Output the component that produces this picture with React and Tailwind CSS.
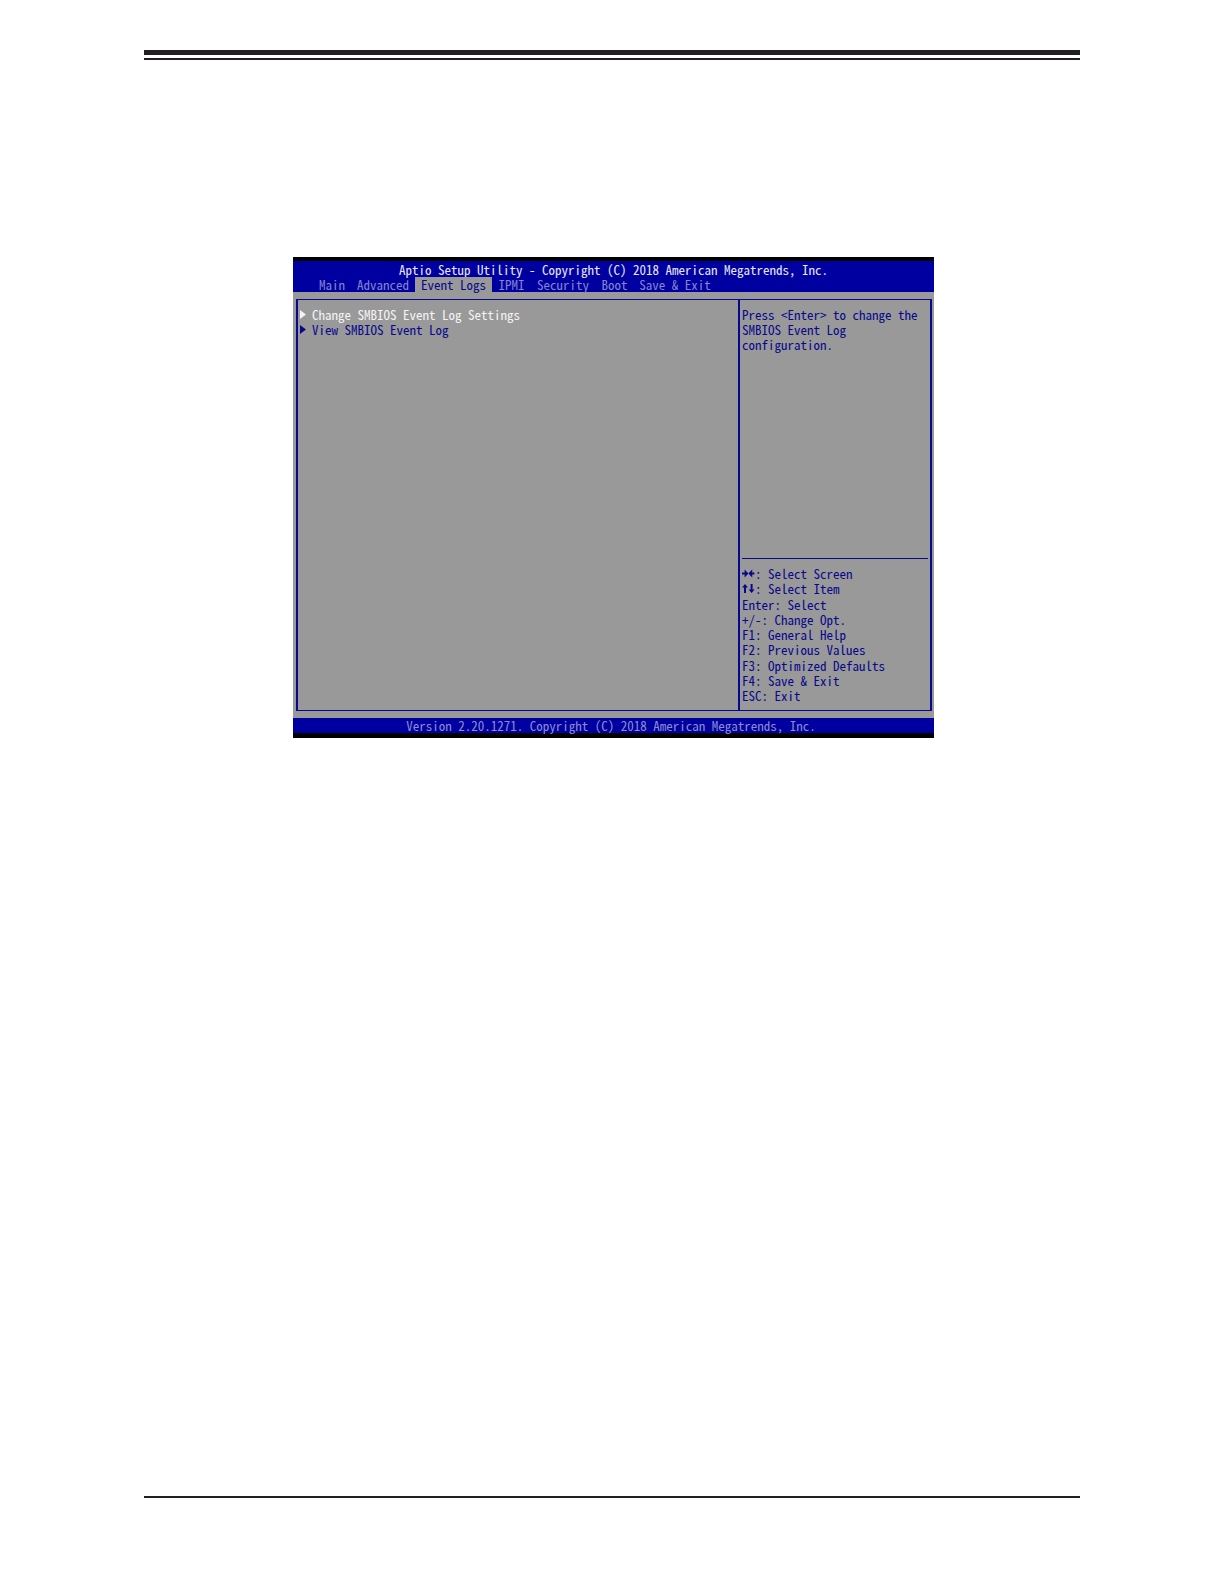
const tabs = [
  { label: "Main", width: "w-[38px]" },
  { label: "Advanced", width: "w-[64px]" },
  { label: "Event Logs", width: "w-[77px]", active: true },
  { label: "IPMI", width: "w-[39px]" },
  { label: "Security", width: "w-[64px]" },
  { label: "Boot", width: "w-[39px]" },
  { label: "Save & Exit", width: "w-[82px]" },
];

const items = [
  { label: "Change SMBIOS Event Log Settings", color: "text-[#f4f4f4]" },
  { label: "View SMBIOS Event Log", color: "text-[#08088c]" },
];

const keys = [
  "Enter: Select",
  "+/-: Change Opt.",
  "F1: General Help",
  "F2: Previous Values",
  "F3: Optimized Defaults",
  "F4: Save & Exit",
  "ESC: Exit",
];

function Triangle() {
  return (
    <svg className="h-[9px] w-[6px]" viewBox="0 0 6 9" fill="currentColor" aria-hidden="true">
      <path d="M0 0L6 4.5L0 9Z" />
    </svg>
  );
}

function SideArrows() {
  return (
    <svg className="h-[9px] w-[13px]" viewBox="0 0 13 9" fill="currentColor" aria-hidden="true">
      <path d="M0 3.5h2.6V0.6L6.4 4.5L2.6 8.4V5.5H0ZM12.4 3.5h-2.2V0.6L6.4 4.5L10.2 8.4V5.5h2.2Z" />
    </svg>
  );
}

function UpDownArrows() {
  return (
    <svg className="h-[9px] w-[13px]" viewBox="0 0 13 9" fill="currentColor" aria-hidden="true">
      <path d="M3 0L6 3.4H4V9H2V3.4H0ZM8.6 0H10.6V5.6H12.6L9.6 9L6.6 5.6H8.6Z" />
    </svg>
  );
}

export default function App() {
  return (
    <div className="flex min-h-screen flex-col bg-white px-36 pt-[50px] pb-[86px]">
      <header className="h-[10px] border-t-[5px] border-b-2 border-[#231f20]" />

      <main className="mt-[197px] ml-[149px] w-full max-w-[641px] border-t-4 border-b-[5px] border-black bg-[#999999] font-['Noto_Sans_Mono_CJK_SC','Liberation_Mono',monospace] text-[13px] leading-[15px] font-light whitespace-pre">
        <div className="bg-[#0000a0] pt-px">
          <h1 className="text-center text-[#e8e8f4]">
            Aptio Setup Utility - Copyright (C) 2018 American Megatrends, Inc.
          </h1>
          <nav className="flex pl-5">
            {tabs.map((tab) => (
              <button
                key={tab.label}
                type="button"
                className={`${tab.width} text-center ${
                  tab.active ? "bg-[#999999] text-[#08088c]" : "text-[#8484d0]"
                }`}
              >
                {tab.label}
              </button>
            ))}
          </nav>
        </div>

        <div className="my-[7px] mr-[2px] ml-[3px] flex min-h-[412px] border-x-2 border-y border-[#08088c] text-[#08088c]">
          <ul className="flex-1 pt-[7px] pl-0.5">
            {items.map((item) => (
              <li key={item.label}>
                <button type="button" className={`flex items-center gap-[6px] ${item.color}`}>
                  <Triangle />
                  {item.label}
                </button>
              </li>
            ))}
          </ul>
          <aside className="flex w-[192px] flex-col border-l-2 border-[#08088c] px-0.5 py-[7px]">
            <p>{"Press <Enter> to change the\nSMBIOS Event Log\nconfiguration."}</p>
            <hr className="mt-auto border-[#08088c]" />
            <ul className="mt-[7px] flex h-[137px] flex-col justify-between">
              <li className="flex items-center">
                <SideArrows />: Select Screen
              </li>
              <li className="flex items-center">
                <UpDownArrows />: Select Item
              </li>
              {keys.map((text) => (
                <li key={text}>{text}</li>
              ))}
            </ul>
          </aside>
        </div>

        <footer className="bg-[#0000a0] pr-[5px] text-center text-[#8c8cd2]">
          Version 2.20.1271. Copyright (C) 2018 American Megatrends, Inc.
        </footer>
      </main>

      <hr className="mt-auto border-t-2 border-[#231f20]" />
    </div>
  );
}
